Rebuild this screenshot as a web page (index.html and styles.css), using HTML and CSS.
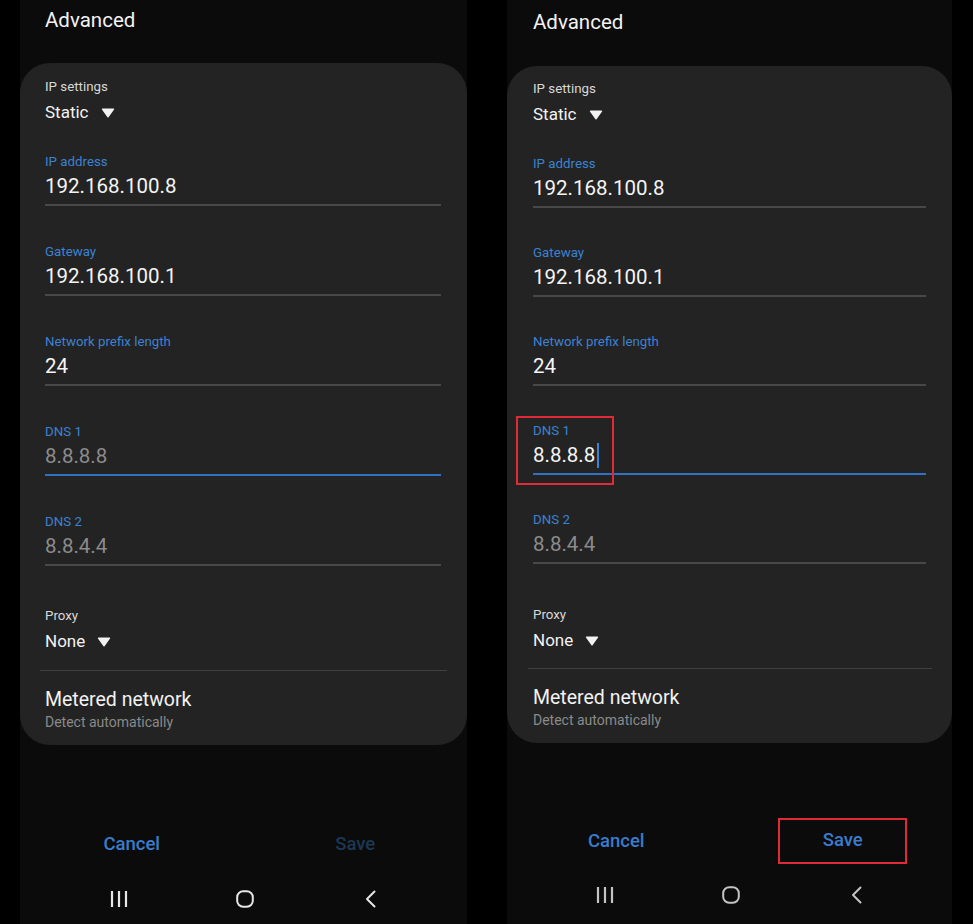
FILE: index.html
```html
<!DOCTYPE html>
<html lang="en">
<head>
<meta charset="utf-8">
<title>Advanced</title>
<link rel="stylesheet" href="styles.css">
</head>
<body>
<div class="screens">
  <section class="phone phone--left">
    <div class="title">Advanced</div>
    <div class="card">
      <div class="select-group">
        <div class="label label--plain">IP settings</div>
        <div class="select"><span>Static</span><svg class="tri" width="14" height="10" viewBox="0 0 14 10"><path d="M1.5 1.2 H12.5 L7 8.8 Z" fill="#f2f2f2" stroke="#f2f2f2" stroke-width="1.4" stroke-linejoin="round"/></svg></div>
      </div>
      <div class="field">
        <div class="label">IP address</div>
        <div class="value">192.168.100.8</div>
      </div>
      <div class="field">
        <div class="label">Gateway</div>
        <div class="value">192.168.100.1</div>
      </div>
      <div class="field">
        <div class="label">Network prefix length</div>
        <div class="value">24</div>
      </div>
      <div class="field field--focus">
        <div class="label">DNS 1</div>
        <div class="value value--hint">8.8.8.8</div>
      </div>
      <div class="field field--last">
        <div class="label">DNS 2</div>
        <div class="value value--hint">8.8.4.4</div>
      </div>
      <div class="select-group select-group--proxy">
        <div class="label label--plain">Proxy</div>
        <div class="select"><span>None</span><svg class="tri" width="14" height="10" viewBox="0 0 14 10"><path d="M1.5 1.2 H12.5 L7 8.8 Z" fill="#f2f2f2" stroke="#f2f2f2" stroke-width="1.4" stroke-linejoin="round"/></svg></div>
      </div>
      <div class="divider"></div>
      <div class="metered">
        <div class="metered-title">Metered network</div>
        <div class="metered-sub">Detect automatically</div>
      </div>
    </div>
    <div class="actions">
      <div class="action"><span class="btn btn--active">Cancel</span></div>
      <div class="action"><span class="btn btn--disabled">Save</span></div>
    </div>
    <div class="navbar">
      <svg class="nav-ico" width="18" height="18" viewBox="0 0 18 18"><path d="M2 1 V17 M9 1 V17 M16 1 V17" stroke="#e6e6e6" stroke-width="2.2" fill="none"/></svg>
      <svg class="nav-ico" width="18" height="18" viewBox="0 0 18 18"><rect x="1.2" y="1.2" width="15.6" height="15.6" rx="6" fill="none" stroke="#e6e6e6" stroke-width="2"/></svg>
      <svg class="nav-ico" width="18" height="18" viewBox="0 0 18 18"><path d="M12.5 1.5 L5 9 L12.5 16.5" stroke="#e6e6e6" stroke-width="2" fill="none" stroke-linecap="round" stroke-linejoin="round"/></svg>
    </div>
  </section>

  <section class="phone phone--right">
    <div class="title">Advanced</div>
    <div class="card">
      <div class="select-group">
        <div class="label label--plain">IP settings</div>
        <div class="select"><span>Static</span><svg class="tri" width="14" height="10" viewBox="0 0 14 10"><path d="M1.5 1.2 H12.5 L7 8.8 Z" fill="#f2f2f2" stroke="#f2f2f2" stroke-width="1.4" stroke-linejoin="round"/></svg></div>
      </div>
      <div class="field">
        <div class="label">IP address</div>
        <div class="value">192.168.100.8</div>
      </div>
      <div class="field">
        <div class="label">Gateway</div>
        <div class="value">192.168.100.1</div>
      </div>
      <div class="field">
        <div class="label">Network prefix length</div>
        <div class="value">24</div>
      </div>
      <div class="field field--focus field--marked">
        <div class="label">DNS 1</div>
        <div class="value">8.8.8.8<span class="cursor"></span></div>
        <div class="highlight highlight--dns"></div>
      </div>
      <div class="field field--last">
        <div class="label">DNS 2</div>
        <div class="value value--hint">8.8.4.4</div>
      </div>
      <div class="select-group select-group--proxy">
        <div class="label label--plain">Proxy</div>
        <div class="select"><span>None</span><svg class="tri" width="14" height="10" viewBox="0 0 14 10"><path d="M1.5 1.2 H12.5 L7 8.8 Z" fill="#f2f2f2" stroke="#f2f2f2" stroke-width="1.4" stroke-linejoin="round"/></svg></div>
      </div>
      <div class="divider"></div>
      <div class="metered">
        <div class="metered-title">Metered network</div>
        <div class="metered-sub">Detect automatically</div>
      </div>
    </div>
    <div class="actions">
      <div class="action"><span class="btn btn--active">Cancel</span></div>
      <div class="action action--shift"><span class="btn btn--active btn--boxed">Save</span></div>
    </div>
    <div class="navbar">
      <svg class="nav-ico" width="18" height="18" viewBox="0 0 18 18"><path d="M2 1 V17 M9 1 V17 M16 1 V17" stroke="#c4c4c4" stroke-width="2.2" fill="none"/></svg>
      <svg class="nav-ico" width="18" height="18" viewBox="0 0 18 18"><rect x="1.2" y="1.2" width="15.6" height="15.6" rx="6" fill="none" stroke="#c4c4c4" stroke-width="2"/></svg>
      <svg class="nav-ico" width="18" height="18" viewBox="0 0 18 18"><path d="M12.5 1.5 L5 9 L12.5 16.5" stroke="#c4c4c4" stroke-width="2" fill="none" stroke-linecap="round" stroke-linejoin="round"/></svg>
    </div>
  </section>
</div>
</body>
</html>
```

FILE: styles.css
```css
* { box-sizing: border-box; }

html, body {
  margin: 0;
  padding: 0;
  background: #000;
}

body {
  font-family: Roboto, "Noto Sans", "Liberation Sans", sans-serif;
  color: #f0f0f0;
  width: 973px;
  height: 924px;
  overflow: hidden;
}

.screens {
  display: flex;
  height: 924px;
  padding-left: 20px;
  gap: 40px;
}

.phone {
  background: #0b0b0b;
  height: 924px;
  display: flex;
  flex-direction: column;
  --title-pad: 0px;
  --card-pad-top: 14px;
  --field-gap: 36px;
  --proxy-gap: 40px;
  --divider-gap: 17px;
  --card-pad-bottom: 14px;
  --actions-gap: 76px;
  --nav-gap: 12px;
}

.phone--left { width: 447px; }

.phone--right {
  width: 445px;
  --title-pad: 2px;
  --card-pad-top: 13px;
  --field-gap: 35px;
  --proxy-gap: 41px;
  --divider-gap: 16px;
  --actions-gap: 75px;
  --nav-gap: 11px;
}

.title {
  height: 63px;
  padding-top: var(--title-pad);
  padding-left: 25px;
  font-size: 20.5px;
  line-height: 40px;
  color: #f2f2f2;
}

.phone--right .title { height: 66px; padding-left: 26px; }

.card {
  background: #232323;
  border-radius: 30px;
  padding: var(--card-pad-top) 26px var(--card-pad-bottom) 25px;
}

.phone--right .card { padding-left: 26px; padding-right: 26px; }

.label {
  font-size: 13.3px;
  line-height: 18px;
  padding-top: 1px;
  height: 18px;
  color: #3b82d2;
}

.label--plain { color: #d8d8d8; }

.select-group { margin-bottom: 28px; }

.select-group--proxy {
  margin-top: var(--proxy-gap);
  margin-bottom: var(--divider-gap);
}

.select {
  margin-top: 5px;
  height: 24px;
  display: flex;
  align-items: center;
  gap: 12px;
  font-size: 17px;
  line-height: 24px;
  color: #f2f2f2;
}

.tri { display: block; margin-top: 1px; }

.field {
  position: relative;
  margin-bottom: var(--field-gap);
}

.field--last { margin-bottom: 0; }

.field .value {
  margin-top: 3px;
  font-size: 20.5px;
  line-height: 24px;
  height: 33px;
  padding-top: 1px;
  padding-bottom: 6px;
  color: #f4f4f4;
  border-bottom: 2px solid #484848;
  display: flex;
  align-items: center;
}

.field--focus .value { border-bottom-color: #2f72c4; }

.value--hint { color: #8b8b8b !important; }

.cursor {
  display: inline-block;
  width: 2px;
  height: 25px;
  margin-left: 2px;
  background: #3b82d2;
}

.highlight {
  position: absolute;
  border: 2px solid #e12a36;
  pointer-events: none;
}

.highlight--dns {
  left: -17px;
  top: -5px;
  width: 98px;
  height: 69px;
}

.divider {
  height: 1px;
  background: #3f3f3f;
  margin: 0 -6px 0 -5px;
}

.metered { margin-top: 16px; }

.metered-title {
  font-size: 19.5px;
  line-height: 26px;
  color: #f2f2f2;
}

.metered-sub {
  font-size: 14px;
  line-height: 18px;
  color: #8a8a8a;
}

.actions {
  margin-top: var(--actions-gap);
  display: flex;
  height: 46px;
}

.action {
  flex: 1;
  display: flex;
  justify-content: center;
  align-items: center;
}

.action--shift { padding-left: 8px; }

.btn {
  font-size: 18.5px;
  font-weight: 500;
  line-height: 22px;
}

.btn--active { color: #3a7ccb; }
.btn--disabled { color: #1c3853; }

.btn--boxed {
  flex: none;
  width: 129px;
  height: 46px;
  display: flex;
  align-items: center;
  justify-content: center;
  border: 2px solid #e12a36;
  padding-bottom: 2px;
}

.navbar {
  margin-top: var(--nav-gap);
  height: 40px;
  display: flex;
  justify-content: center;
  align-items: center;
  gap: 108px;
  padding-left: 2px;
}

.nav-ico { display: block; }
```
